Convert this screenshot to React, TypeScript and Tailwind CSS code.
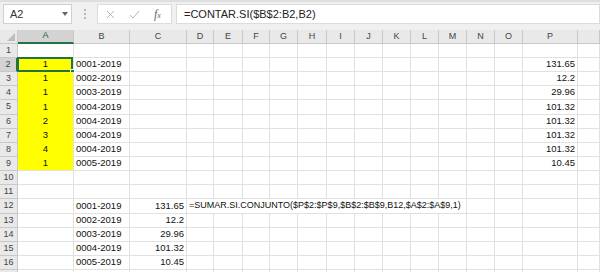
import React from 'react'

const cols = ['A', 'B', 'C', 'D', 'E', 'F', 'G', 'H', 'I', 'J', 'K', 'L', 'M', 'N', 'O', 'P', 'Q']

const data: Record<string, string> = {
  A2: '1', A3: '1', A4: '1', A5: '1', A6: '2', A7: '3', A8: '4', A9: '1',
  B2: '0001-2019', B3: '0002-2019', B4: '0003-2019', B5: '0004-2019',
  B6: '0004-2019', B7: '0004-2019', B8: '0004-2019', B9: '0005-2019',
  P2: '131.65', P3: '12.2', P4: '29.96', P5: '101.32',
  P6: '101.32', P7: '101.32', P8: '101.32', P9: '10.45',
  B12: '0001-2019', B13: '0002-2019', B14: '0003-2019', B15: '0004-2019', B16: '0005-2019',
  C12: '131.65', C13: '12.2', C14: '29.96', C15: '101.32', C16: '10.45',
}

const font = { fontFamily: '"Liberation Sans", Arial, sans-serif' }

function Toolbar() {
  return (
    <div className="h-[30px] bg-[#f0f0f0] border-t-2 border-[#dedede] flex items-start pt-[2px] pl-[3px]">
      <div className="w-[69px] h-[20px] bg-white border border-[#d0d0d0] flex items-center justify-between pl-[6px] pr-[3px] text-[11px] text-[#333]">
        <span>A2</span>
        <svg width="6" height="4" viewBox="0 0 6 4"><path d="M0 0h6L3 4z" fill="#666" /></svg>
      </div>
      <div className="w-[25px] h-[20px] flex flex-col items-center justify-center gap-[2px]">
        <div className="w-[2px] h-[2px] bg-[#b8b8b8]" />
        <div className="w-[2px] h-[2px] bg-[#b8b8b8]" />
        <div className="w-[2px] h-[2px] bg-[#b8b8b8]" />
      </div>
      <div className="w-[75px] h-[20px] bg-white border border-[#dcdcdc] flex items-center pl-[8px] gap-[14px]">
        <svg width="9" height="9" viewBox="0 0 9 9"><path d="M1 1l7 7M8 1L1 8" stroke="#b5b5b5" strokeWidth="1" /></svg>
        <svg width="11" height="9" viewBox="0 0 11 9"><path d="M1 5l3 3 6-7" stroke="#b5b5b5" strokeWidth="1" fill="none" /></svg>
        <span className="italic text-[12px] text-[#666] leading-none" style={{ fontFamily: '"Liberation Serif", serif' }}>
          f<span className="text-[8px]">x</span>
        </span>
      </div>
      <div className="ml-[4px] flex-1 h-[20px] bg-white border border-[#dcdcdc] flex items-center pl-[7px] text-[11px] text-[#222]">
        =CONTAR.SI($B$2:B2,B2)
      </div>
    </div>
  )
}

function HeaderRow() {
  return (
    <>
      <div className="h-[14px] bg-[#e9e9e9] border-r border-b border-[#c8c8c8] flex items-end justify-end p-[2px]">
        <svg width="8" height="8" viewBox="0 0 8 8"><path d="M8 0v8H0z" fill="#bdbdbd" /></svg>
      </div>
      {cols.map((c) =>
        c === 'A' ? (
          <div key={c} className="h-[14px] bg-[#d3d3d3] border-r border-[#c8c8c8] border-b-2 border-b-[#217346] flex items-center justify-center text-[9px] text-[#1e5d38]">
            {c}
          </div>
        ) : (
          <div key={c} className="h-[14px] bg-[#e9e9e9] border-r border-b border-[#c8c8c8] flex items-center justify-center text-[9px] text-[#444]">
            {c === 'Q' ? '' : c}
          </div>
        ),
      )}
    </>
  )
}

// a couple of rows are one pixel taller so the sheet keeps Excel's 14.14px pitch
const tall = [5, 12]

function Row({ r }: { r: number }) {
  const yellow = r >= 2 && r <= 9
  const h = tall.includes(r) ? 'h-[15px]' : 'h-[14px]'
  return (
    <>
      <div
        className={
          r === 2
            ? `${h} bg-[#d3d3d3] border-r-2 border-r-[#217346] border-b border-[#c8c8c8] flex items-center justify-center text-[9px] text-[#1e5d38]`
            : `${h} bg-[#e9e9e9] border-r border-b border-[#c8c8c8] flex items-center justify-center text-[9px] text-[#444]`
        }
      >
        {r < 17 ? r : ''}
      </div>
      {cols.map((c) => {
        const key = c + r
        if (r === 12 && ['E', 'F', 'G', 'H', 'I', 'J', 'K', 'L', 'M'].includes(c)) return null
        if (r === 12 && c === 'D') {
          return (
            <div key={key} className={`col-span-10 ${h} border-r border-b border-[#e1e1e1] flex items-center pl-[2px] text-[9px] text-[#111] whitespace-nowrap`}>
              =SUMAR.SI.CONJUNTO($P$2:$P$9,$B$2:$B$9,B12,$A$2:$A$9,1)
            </div>
          )
        }
        const v = data[key] ?? ''
        if (c === 'A' && yellow) {
          return (
            <div
              key={key}
              className={
                r === 9
                  ? `relative ${h} bg-[#ffff00] border-r border-b border-[#e1e1e1] flex items-center justify-center text-[9.5px] text-[#111]`
                  : `relative ${h} bg-[#ffff00] border-r border-b border-r-[#e1e1e1] border-b-[#ffff00] flex items-center justify-center text-[9.5px] text-[#111]`
              }
            >
              {v}
              {r === 2 && (
                <div className="absolute -left-[1px] -top-[1px] right-0 -bottom-[1px] border-2 border-[#217346]">
                  <div className="absolute -right-[4px] -bottom-[4px] w-[5px] h-[5px] bg-[#217346] border border-white" />
                </div>
              )}
            </div>
          )
        }
        const right = c === 'C' || c === 'P'
        return (
          <div
            key={key}
            className={
              right
                ? `${h} border-r border-b border-[#e1e1e1] flex items-center justify-end pr-[2px] text-[9.5px] text-[#111] whitespace-nowrap`
                : `${h} border-r border-b border-[#e1e1e1] flex items-center pl-[2px] text-[9.5px] text-[#111] whitespace-nowrap`
            }
          >
            {v}
          </div>
        )
      })}
    </>
  )
}

export default function App() {
  const rows = Array.from({ length: 17 }, (_, i) => i + 1)
  return (
    <div className="w-[600px] h-[272px] overflow-hidden bg-white" style={font}>
      <Toolbar />
      <div className="grid grid-cols-[18px_56px_56px_57px_27px_29px_27px_28px_29px_28px_28px_28px_28px_28px_28px_28px_55px_1fr]">
        <HeaderRow />
        {rows.map((r) => (
          <Row key={r} r={r} />
        ))}
      </div>
    </div>
  )
}
